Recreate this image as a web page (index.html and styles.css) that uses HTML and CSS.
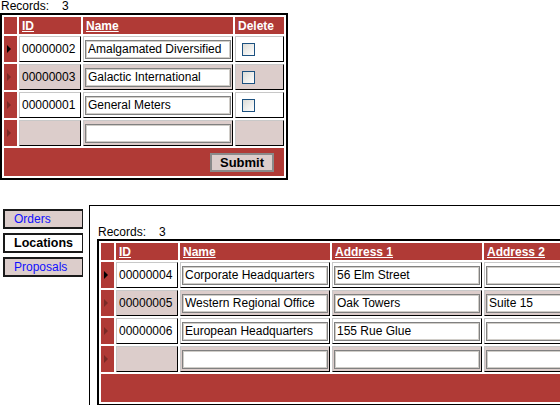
FILE: index.html
```html
<!DOCTYPE html>
<html lang="en">
<head>
    <meta charset="UTF-8">
    <title>Companies</title>
    <link rel="stylesheet" href="styles.css">
</head>
<body>
    <div class="records">Records:<span class="count">3</span></div>
    <table class="grid">
        <tr>
            <th class="rh"></th>
            <th class="c-id"><a href="#">ID</a></th>
            <th class="c-name"><a href="#">Name</a></th>
            <th class="c-del">Delete</th>
        </tr>
        <tr>
            <td class="rh"><span class="arrow current"></span></td>
            <td class="cell">00000002</td>
            <td class="cell inp"><input class="field" type="text" value="Amalgamated Diversified"></td>
            <td class="cell"><span class="check"></span></td>
        </tr>
        <tr class="alt">
            <td class="rh"><span class="arrow"></span></td>
            <td class="cell">00000003</td>
            <td class="cell inp"><input class="field" type="text" value="Galactic International"></td>
            <td class="cell"><span class="check"></span></td>
        </tr>
        <tr>
            <td class="rh"><span class="arrow"></span></td>
            <td class="cell">00000001</td>
            <td class="cell inp"><input class="field" type="text" value="General Meters"></td>
            <td class="cell"><span class="check"></span></td>
        </tr>
        <tr class="alt">
            <td class="rh"><span class="arrow"></span></td>
            <td class="cell"></td>
            <td class="cell inp"><input class="field" type="text" value=""></td>
            <td class="cell"></td>
        </tr>
        <tr>
            <td class="foot" colspan="4"><button class="submit" type="submit">Submit</button></td>
        </tr>
    </table>

    <div class="lower">
        <ul class="tabs">
            <li class="tab"><a href="#">Orders</a></li>
            <li class="tab active">Locations</li>
            <li class="tab"><a href="#">Proposals</a></li>
        </ul>
        <div class="panel">
            <div class="records">Records:<span class="count">3</span></div>
            <table class="grid">
                <tr>
                    <th class="rh"></th>
                    <th class="c-id"><a href="#">ID</a></th>
                    <th class="c-name"><a href="#">Name</a></th>
                    <th class="c-name"><a href="#">Address 1</a></th>
                    <th class="c-name"><a href="#">Address 2</a></th>
                </tr>
                <tr>
                    <td class="rh"><span class="arrow current"></span></td>
                    <td class="cell">00000004</td>
                    <td class="cell inp"><input class="field" type="text" value="Corporate Headquarters"></td>
                    <td class="cell inp"><input class="field" type="text" value="56 Elm Street"></td>
                    <td class="cell inp"><input class="field" type="text" value=""></td>
                </tr>
                <tr class="alt">
                    <td class="rh"><span class="arrow"></span></td>
                    <td class="cell">00000005</td>
                    <td class="cell inp"><input class="field" type="text" value="Western Regional Office"></td>
                    <td class="cell inp"><input class="field" type="text" value="Oak Towers"></td>
                    <td class="cell inp"><input class="field" type="text" value="Suite 15"></td>
                </tr>
                <tr>
                    <td class="rh"><span class="arrow"></span></td>
                    <td class="cell">00000006</td>
                    <td class="cell inp"><input class="field" type="text" value="European Headquarters"></td>
                    <td class="cell inp"><input class="field" type="text" value="155 Rue Glue"></td>
                    <td class="cell inp"><input class="field" type="text" value=""></td>
                </tr>
                <tr class="alt">
                    <td class="rh"><span class="arrow"></span></td>
                    <td class="cell"></td>
                    <td class="cell inp"><input class="field" type="text" value=""></td>
                    <td class="cell inp"><input class="field" type="text" value=""></td>
                    <td class="cell inp"><input class="field" type="text" value=""></td>
                </tr>
                <tr>
                    <td class="foot" colspan="5"></td>
                </tr>
            </table>
        </div>
    </div>
</body>
</html>
```

FILE: styles.css
```css
:root{
    --red: rgb(176, 58, 54);
    --darkred: rgb(122, 42, 38);
    --pink: rgb(220, 205, 203);
}
html,body{
    margin: 0;
    padding: 0;
    overflow: hidden;
    background: white;
}
body {
    font-family: "Liberation Sans", Arial, sans-serif;
    font-size: 12px;
    color: #000;
}
.records {
    height: 13px;
    line-height: 13px;
    padding-left: 1px;
}
.count {
    margin-left: 13px;
}
.grid {
    border: 2px solid #000;
    border-spacing: 2px;
}
.grid th,
.grid td {
    padding: 0;
    box-sizing: border-box;
}
.grid th {
    background-color: var(--red);
    color: white;
    height: 17px;
    text-align: left;
    padding: 0 3px;
    font-weight: bold;
}
.grid th a {
    color: white;
}
.grid th.rh {
    padding: 0;
}
.rh {
    background-color: var(--red);
    width: 13px;
}
.c-id {
    width: 62px;
}
.c-name {
    width: 150px;
}
.c-del {
    width: 49px;
}
.arrow {
    display: block;
    width: 0;
    height: 0;
    margin-left: 3px;
    border-left: 4px solid var(--darkred);
    border-top: 4px solid transparent;
    border-bottom: 4px solid transparent;
}
.arrow.current {
    border-left-color: #000;
}
.cell {
    height: 26px;
    border: 1px solid;
    border-color: #c8c8c8 #000 #000 #c8c8c8;
    background: white;
    white-space: nowrap;
}
.grid td.cell {
    padding: 0 2px;
}
.grid td.inp {
    padding: 0 1px;
}
.alt .cell {
    background-color: var(--pink);
}
.field {
    display: block;
    width: 146px;
    height: 19px;
    box-sizing: border-box;
    margin: 0;
    padding: 0 2px;
    border: 1px solid #808080;
    box-shadow: inset 0 0 0 1px #d0cdc8;
    font-family: "Liberation Sans", Arial, sans-serif;
    font-size: 12px;
    color: #000;
    background: white;
}
.check {
    display: inline-block;
    vertical-align: middle;
    width: 13px;
    height: 13px;
    box-sizing: border-box;
    margin-left: 4px;
    border: 1px solid #1c5180;
    background: linear-gradient(135deg, #dcdcd7, #ffffff);
}
.grid td.foot {
    background-color: var(--red);
    height: 28px;
    text-align: right;
    padding-right: 10px;
}
.submit {
    width: 64px;
    height: 19px;
    padding: 0;
    border: 2px solid #8a8a8a;
    background-color: var(--pink);
    font-family: "Liberation Sans", Arial, sans-serif;
    font-size: 13px;
    font-weight: bold;
    color: #000;
    vertical-align: middle;
}
.lower {
    display: flex;
    align-items: flex-start;
    margin-top: 25px;
    white-space: nowrap;
}
.tabs {
    list-style: none;
    margin: 4px 0 0 3px;
    padding: 0;
    width: 80px;
    flex: none;
}
.tab {
    height: 20px;
    box-sizing: border-box;
    border: 2px solid #1a1a1a;
    border-right-width: 1px;
    background-color: var(--pink);
    padding-left: 9px;
    line-height: 17px;
    margin-bottom: 4px;
}
.tab a {
    color: #1010ff;
    text-decoration: none;
}
.tab.active {
    background: white;
    font-weight: bold;
    font-size: 12.5px;
}
.panel {
    flex: none;
    margin-left: 6px;
    border-top: 1px solid #000;
    border-left: 1px solid #000;
    padding: 20px 0 200px 7px;
}
```
